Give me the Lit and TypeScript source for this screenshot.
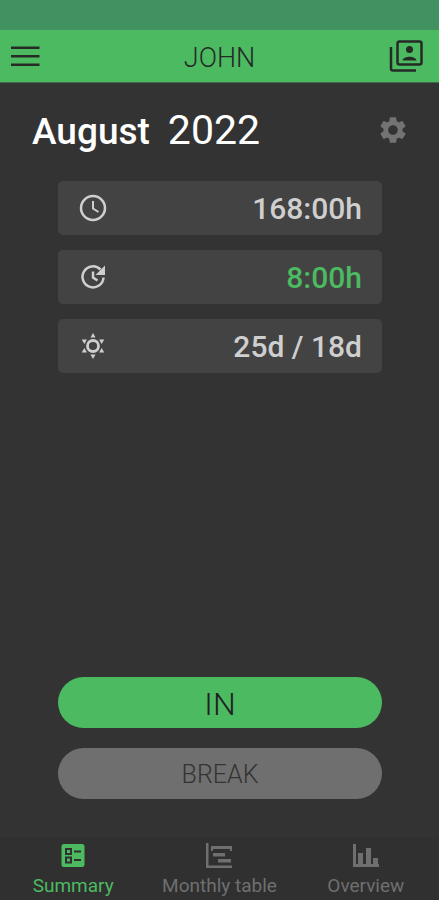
import { LitElement, html, css, svg } from "lit";
import { customElement } from "lit/decorators.js";

const tabs = [
  {
    label: "Summary",
    active: true,
    icon: svg`<path fill-rule="evenodd" d="M4 1h18a2.500 2.500 0 0 1 2.500 2.500v18a2.500 2.500 0 0 1-2.500 2.500H4a2.500 2.500 0 0 1-2.500-2.500v-18A2.500 2.500 0 0 1 4 1zM5 5v7h7V5zM7 7h3v3H7zM5 13.500v7h7v-7zM7 15.500h3v3H7zM14 7.500v2h7v-2zM14 16v2h7v-2z"/>`,
  },
  {
    label: "Monthly table",
    active: false,
    icon: svg`<path d="M0 0h2.500v22.500H26V25H0zM5 3h21v5h-2V6H7v2H5zM7 10h12v3.500H7zM12 16h13v3.500H12z"/>`,
  },
  {
    label: "Overview",
    active: false,
    icon: svg`<path d="M0 1h3v20h23v3H0zM5 10h5v12H5zM13 5h5v17h-5zM20 15h5v7h-5z"/>`,
  },
];

const rows = [
  {
    name: "Worked time",
    value: "168:00h",
    accent: false,
    icon: svg`<circle cx="14" cy="14" r="12" fill="none" stroke="currentColor" stroke-width="2.500"/><path d="M14 7v7.500l5.500 3.500" fill="none" stroke="currentColor" stroke-width="2"/>`,
  },
  {
    name: "Overtime",
    value: "8:00h",
    accent: true,
    icon: svg`<path d="M21.500 6.500A10.500 10.500 0 1 0 24.500 14.500M14 8.500v6l4.500 3" fill="none" stroke="currentColor" stroke-width="2.500"/><path d="M26 2.500v9.500h-9.500z"/>`,
  },
  {
    name: "Vacation days",
    value: "25d / 18d",
    accent: false,
    icon: svg`<circle cx="14" cy="14" r="5.500" fill="none" stroke="currentColor" stroke-width="2.800"/>
      ${[0, 60, 120, 180, 240, 300].map(
        (a) => svg`<path d="M14 1l2.500 4.500h-5z" transform="rotate(${a} 14 14)"/>`
      )}`,
  },
];

@customElement("app-root")
export class AppRoot extends LitElement {
  static styles = css`
    :host {
      display: flex;
      flex-direction: column;
      min-height: 100vh;
      background: #333333;
      color: #ffffff;
      font-family: Roboto, "Noto Sans", sans-serif;
    }
    button {
      border: 0;
      padding: 0;
      margin: 0;
      background: none;
      color: inherit;
      font: inherit;
      cursor: pointer;
    }
    svg {
      display: block;
      fill: currentColor;
    }
    .status {
      height: 30px;
      background: #429161;
    }
    .bar {
      display: grid;
      grid-template-columns: 40px 1fr 40px;
      align-items: center;
      height: 52px;
      padding: 0 8px;
      background: #4cba61;
      color: #262a27;
      border-bottom: 1px solid #40684a;
    }
    .bar h1 {
      margin: 0;
      padding-top: 4px;
      text-align: center;
      font-size: 27px;
      line-height: 32px;
      font-weight: 300;
    }
    .bar .account {
      justify-self: end;
      padding-right: 8px;
    }
    main {
      flex: 1;
      display: flex;
      flex-direction: column;
    }
    .month {
      display: flex;
      align-items: center;
      padding: 24px 30px 0 32px;
      height: 48px;
    }
    .month h2 {
      display: flex;
      align-items: baseline;
      flex: 1;
      gap: 18px;
      margin: 0;
      font-size: 37px;
      line-height: 48px;
      font-weight: 500;
    }
    .month .year {
      font-size: 41px;
      font-weight: 400;
    }
    .settings {
      color: #737373;
      padding-bottom: 3px;
    }
    .rows {
      display: flex;
      flex-direction: column;
      gap: 15px;
      margin: 26px 57px 0 58px;
    }
    .row {
      display: flex;
      align-items: center;
      justify-content: space-between;
      height: 54px;
      padding: 0 20px 0 21px;
      border-radius: 5px;
      background: #434343;
      color: #cfcfcf;
    }
    .value {
      padding-top: 2px;
      font-size: 30px;
      line-height: 36px;
      font-weight: 500;
    }
    .accent {
      color: #4cba61;
    }
    .actions {
      display: flex;
      flex-direction: column;
      gap: 20px;
      margin: auto 57px 38px 58px;
    }
    .action {
      height: 51px;
      padding-top: 2px;
      border-radius: 26px;
      font-weight: 300;
    }
    .in {
      background: #4cba61;
      color: #222222;
      font-size: 32px;
    }
    .break {
      background: #6f6f6f;
      color: #333333;
      font-size: 25px;
    }
    nav {
      display: grid;
      grid-template-columns: repeat(3, 1fr);
      height: 63px;
      background: #303030;
    }
    .tab {
      display: flex;
      flex-direction: column;
      align-items: center;
      gap: 5px;
      padding-top: 6px;
      color: #6f6f6f;
      font-size: 19px;
      line-height: 24px;
      text-decoration: none;
    }
    .tab.active {
      color: #4cba61;
    }
  `;

  render() {
    return html`
      <div class="status"></div>
      <header class="bar">
        <button aria-label="Menu">
          <svg width="34" height="24" viewBox="0 0 34 24">
            <path d="M3 2.500h28.500V5H3zM3 11h28.500v2.500H3zM3 19.500h28.500V22H3z" />
          </svg>
        </button>
        <h1>JOHN</h1>
        <button class="account" aria-label="Accounts">
          <svg width="34" height="34" viewBox="0 0 34 34">
            <path d="M2 8v21.500a2 2 0 0 0 2 2H27" fill="none" stroke="currentColor" stroke-width="2.500" />
            <rect x="8.500" y="2.500" width="24" height="23" rx="2" fill="none" stroke="currentColor" stroke-width="2.500" />
            <circle cx="20.500" cy="10.500" r="3.500" />
            <path d="M13.500 21.500c1-5 13-5 14 0z" />
          </svg>
        </button>
      </header>
      <main>
        <div class="month">
          <h2><span>August</span><span class="year">2022</span></h2>
          <button class="settings" aria-label="Settings">
            <svg width="32" height="32" viewBox="0 0 24 24">
              <path
                d="M19.140 12.940c.040-.300.060-.610.060-.940 0-.320-.020-.640-.070-.940l2.030-1.580c.180-.140.230-.410.120-.610l-1.920-3.320c-.120-.220-.370-.290-.590-.220l-2.390.960c-.500-.380-1.030-.700-1.620-.940l-.360-2.540c-.040-.240-.240-.410-.480-.410h-3.840c-.240 0-.430.170-.470.410l-.360 2.540c-.590.240-1.130.570-1.620.940l-2.390-.960c-.220-.080-.470 0-.590.220L2.740 8.870c-.120.210-.080.470.120.610l2.030 1.580c-.050.300-.090.630-.090.940s.020.640.070.940l-2.030 1.580c-.180.140-.230.410-.120.610l1.920 3.320c.120.220.370.290.590.220l2.390-.960c.500.380 1.030.700 1.620.940l.360 2.540c.050.240.240.410.480.410h3.840c.240 0 .440-.170.470-.410l.360-2.540c.590-.240 1.130-.560 1.620-.940l2.390.960c.220.080.470 0 .590-.220l1.920-3.320c.120-.220.070-.470-.120-.610zM12 15.600c-1.980 0-3.600-1.620-3.600-3.600s1.620-3.600 3.600-3.600 3.600 1.620 3.600 3.600-1.620 3.600-3.600 3.600z"
              />
            </svg>
          </button>
        </div>
        <section class="rows">
          ${rows.map(
            (r) => html`<div class="row">
              <svg width="28" height="28" viewBox="0 0 28 28" role="img" aria-label=${r.name}>${r.icon}</svg>
              <span class="value ${r.accent ? "accent" : ""}">${r.value}</span>
            </div>`
          )}
        </section>
        <div class="actions">
          <button class="action in">IN</button>
          <button class="action break">BREAK</button>
        </div>
      </main>
      <nav>
        ${tabs.map(
          (t) => html`<a href="#" class="tab ${t.active ? "active" : ""}">
            <svg width="26" height="26" viewBox="0 0 26 26" aria-hidden="true">${t.icon}</svg>
            <span>${t.label}</span>
          </a>`
        )}
      </nav>
    `;
  }
}
